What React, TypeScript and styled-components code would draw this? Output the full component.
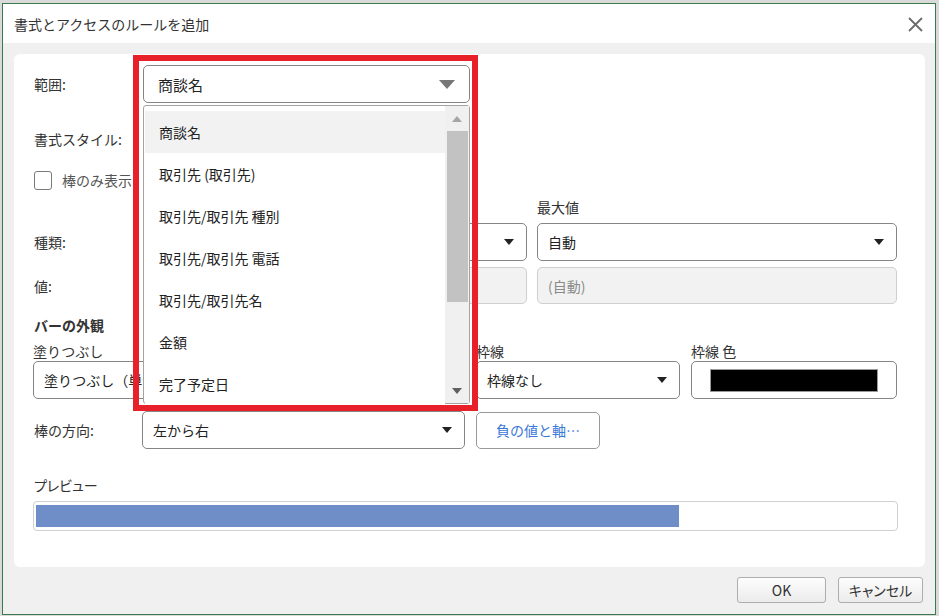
import * as React from "react";
import styled, { createGlobalStyle } from "styled-components";

const GlobalStyle = createGlobalStyle`
  html, body {
    margin: 0;
    padding: 0;
    background: #dadada;
  }
  body {
    font-family: "Noto Sans CJK JP", "Noto Sans", sans-serif;
    color: #333;
  }
`;

const Window = styled.div`
  position: relative;
  box-sizing: border-box;
  margin: 3px 0 0 2px;
  width: 934px;
  height: 612px;
  border: 1px solid #3a7a4c;
  background: #f0f0f0;
  display: flex;
  flex-direction: column;
`;

const TitleBar = styled.div`
  height: 39px;
  background: #fff;
  display: flex;
  align-items: center;
  justify-content: space-between;
  padding: 0 12px 0 11px;
  font-size: 14px;
  color: #333;
`;

const CloseButton = styled.div`
  width: 16px;
  height: 16px;
  display: flex;
  align-items: center;
  justify-content: center;
  margin-top: 1px;
`;

const Body = styled.div`
  flex: 1;
  padding: 11px 10px 0 11px;
  display: flex;
  flex-direction: column;
`;

const Card = styled.div`
  position: relative;
  background: #fff;
  border-radius: 6px;
  height: 513px;
  box-sizing: border-box;
  padding: 11px 27px 0 20px;
  font-size: 14px;
`;

const Row = styled.div<{ $top?: number }>`
  display: flex;
  align-items: center;
  margin-top: ${(p) => p.$top ?? 0}px;
`;

const Label = styled.div<{ $w?: number }>`
  width: ${(p) => p.$w ?? 109}px;
  flex-shrink: 0;
  font-size: 14px;
  color: #333;
  line-height: 20px;
`;

const Select = styled.div<{ $w?: number; $h?: number; $size?: number }>`
  box-sizing: border-box;
  width: ${(p) => (p.$w ? `${p.$w}px` : "100%")};
  height: ${(p) => p.$h ?? 38}px;
  border: 1px solid #858585;
  border-radius: 5px;
  background: #fff;
  display: flex;
  align-items: center;
  justify-content: space-between;
  padding: 0 12px 0 10px;
  font-size: ${(p) => p.$size ?? 14}px;
  color: #222;
  white-space: nowrap;
  overflow: hidden;
`;

const ReadOnlyField = styled.div`
  box-sizing: border-box;
  height: 37px;
  border: 1px solid #cfcfcf;
  border-radius: 5px;
  background: #f2f2f2;
  display: flex;
  align-items: center;
  padding: 0 10px;
  font-size: 14px;
  color: #8a8a8a;
`;

const Caret = styled.span`
  width: 0;
  height: 0;
  border-left: 5px solid transparent;
  border-right: 5px solid transparent;
  border-top: 6px solid #222;
`;

const BigCaret = styled.span`
  width: 0;
  height: 0;
  border-left: 8px solid transparent;
  border-right: 8px solid transparent;
  border-top: 9px solid #777;
  margin-right: 2px;
`;

const CheckRow = styled.div`
  display: flex;
  align-items: center;
  gap: 10px;
  margin-top: 12px;
  height: 20px;
  color: #555;
`;

const CheckBox = styled.span`
  box-sizing: border-box;
  width: 18px;
  height: 19px;
  border: 1px solid #7a7a7a;
  border-radius: 3px;
  background: #fff;
`;

const RangeGrid = styled.div`
  display: grid;
  grid-template-columns: 99px 384px 360px;
  column-gap: 10px;
  row-gap: 6px;
  margin-top: 10px;
  align-items: center;
`;

const ColumnLabel = styled.div<{ $lift?: number }>`
  font-size: 14px;
  line-height: 20px;
  margin-top: ${(p) => -(p.$lift ?? 0)}px;
  margin-bottom: ${(p) => (p.$lift ?? 0) - 3}px;
  color: #333;
`;

const SectionTitle = styled.div`
  font-weight: bold;
  font-size: 14px;
  line-height: 20px;
  margin-top: 11px;
  color: #333;
`;

const AppearanceGrid = styled.div`
  display: grid;
  grid-template-columns: 432px 204px 206px;
  column-gap: 11px;
  row-gap: 2px;
  margin-top: 7px;
  margin-left: -1px;
  margin-right: -1px;
`;

const ColorField = styled.div`
  box-sizing: border-box;
  height: 38px;
  border: 1px solid #858585;
  border-radius: 5px;
  background: #fff;
  display: flex;
  align-items: center;
  justify-content: center;
`;

const Swatch = styled.div<{ $color: string }>`
  width: 168px;
  height: 23px;
  background: ${(p) => p.$color};
  border: 1px solid #9a9a9a;
  box-sizing: border-box;
`;

const LinkButton = styled.div`
  box-sizing: border-box;
  width: 124px;
  height: 37px;
  border: 1px solid #999;
  border-radius: 5px;
  background: #fff;
  display: flex;
  align-items: center;
  justify-content: center;
  color: #3b78d8;
  font-size: 14px;
  margin-left: 11px;
`;

const PreviewLabel = styled.div`
  font-size: 14px;
  line-height: 20px;
  margin-top: 26px;
  color: #333;
  font-feature-settings: "palt";
`;

const PreviewBox = styled.div`
  box-sizing: border-box;
  height: 30px;
  margin: 6px 0 0 -1px;
  border: 1px solid #d0d0d0;
  border-radius: 4px;
  padding: 3px 2px;
`;

const PreviewBar = styled.div`
  height: 22px;
  background: #6f8ec8;
`;

const Footer = styled.div`
  display: flex;
  justify-content: flex-end;
  gap: 12px;
  padding: 10px 2px 0 0;
`;

const DialogButton = styled.div<{ $w: number }>`
  box-sizing: border-box;
  width: ${(p) => p.$w}px;
  height: 26px;
  border: 1px solid #adadad;
  border-radius: 3px;
  background: linear-gradient(#fdfdfd, #ebebeb);
  display: flex;
  align-items: center;
  justify-content: center;
  font-size: 14px;
  color: #333;
  font-feature-settings: "palt";
`;

/* overlays: the open dropdown and the red callout frame */
const DropList = styled.div`
  position: absolute;
  left: 129px;
  top: 51px;
  width: 327px;
  height: 299px;
  box-sizing: border-box;
  border: 1px solid #a3a3a3;
  border-radius: 3px;
  background: #fff;
  display: flex;
  padding: 5px 0 0 1px;
  z-index: 2;
`;

const Items = styled.div`
  flex: 1;
  display: flex;
  flex-direction: column;
`;

const Item = styled.div<{ $active?: boolean }>`
  height: 42px;
  flex-shrink: 0;
  display: flex;
  align-items: center;
  padding-left: 14px;
  font-size: 14px;
  color: #222;
  background: ${(p) => (p.$active ? "#f2f2f2" : "#fff")};
`;

const ScrollTrack = styled.div`
  width: 24px;
  margin-top: -5px;
  background: #f0f0f0;
  display: flex;
  flex-direction: column;
  align-items: center;
`;

const ScrollArrow = styled.div<{ $down?: boolean; $color: string }>`
  height: 25px;
  display: flex;
  align-items: center;
  justify-content: center;
  &::after {
    content: "";
    border-left: 5px solid transparent;
    border-right: 5px solid transparent;
    ${(p) =>
      p.$down
        ? `border-top: 6px solid ${p.$color};`
        : `border-bottom: 6px solid ${p.$color};`}
  }
`;

const ScrollThumb = styled.div`
  width: 21px;
  height: 171px;
  background: #c2c2c2;
`;

const Callout = styled.div`
  position: absolute;
  left: 119px;
  top: 1px;
  width: 345px;
  height: 356px;
  box-sizing: border-box;
  border: 6px solid #e8202a;
  z-index: 3;
  pointer-events: none;
`;

const fields = [
  "商談名",
  "取引先 (取引先)",
  "取引先/取引先 種別",
  "取引先/取引先 電話",
  "取引先/取引先名",
  "金額",
  "完了予定日",
];

export default function App() {
  return (
    <>
      <GlobalStyle />
      <Window>
        <TitleBar>
          <span>書式とアクセスのルールを追加</span>
          <CloseButton>
            <svg width="15" height="15" viewBox="0 0 15 15">
              <path d="M1 1L14 14M14 1L1 14" stroke="#6b6b6b" strokeWidth="1.8" />
            </svg>
          </CloseButton>
        </TitleBar>
        <Body>
          <Card>
            <Row>
              <Label>範囲:</Label>
              <Select $w={327} $size={15}>
                <span style={{ marginLeft: 4 }}>商談名</span>
                <BigCaret />
              </Select>
            </Row>
            <Row $top={17}>
              <Label>書式スタイル:</Label>
              <Select $w={327}>
                <span />
                <Caret />
              </Select>
            </Row>
            <CheckRow>
              <CheckBox />
              <span>棒のみ表示</span>
            </CheckRow>
            <RangeGrid>
              <div />
              <div />
              <ColumnLabel $lift={3}>最大値</ColumnLabel>
              <Label>種類:</Label>
              <Select>
                <span />
                <Caret />
              </Select>
              <Select>
                <span>自動</span>
                <Caret />
              </Select>
              <Label>値:</Label>
              <ReadOnlyField />
              <ReadOnlyField>(自動)</ReadOnlyField>
            </RangeGrid>
            <SectionTitle>バーの外観</SectionTitle>
            <AppearanceGrid>
              <ColumnLabel $lift={1}>塗りつぶし</ColumnLabel>
              <ColumnLabel $lift={1}>枠線</ColumnLabel>
              <ColumnLabel $lift={1}>枠線 色</ColumnLabel>
              <Select>
                <span>塗りつぶし（単色）</span>
                <Caret />
              </Select>
              <Select>
                <span>枠線なし</span>
                <Caret />
              </Select>
              <ColorField>
                <Swatch $color="#000" />
              </ColorField>
            </AppearanceGrid>
            <Row $top={12}>
              <Label $w={108}>棒の方向:</Label>
              <Select $w={323}>
                <span>左から右</span>
                <Caret />
              </Select>
              <LinkButton>負の値と軸…</LinkButton>
            </Row>
            <PreviewLabel>プレビュー</PreviewLabel>
            <PreviewBox>
              <PreviewBar style={{ width: 643 }} />
            </PreviewBox>

            <DropList>
              <Items>
                {fields.map((f, i) => (
                  <Item key={f} $active={i === 0}>
                    {f}
                  </Item>
                ))}
              </Items>
              <ScrollTrack>
                <ScrollArrow $color="#a6a6a6" />
                <ScrollThumb />
                <div style={{ flex: 1 }} />
                <ScrollArrow $down $color="#606060" />
              </ScrollTrack>
            </DropList>
            <Callout />
          </Card>
          <Footer>
            <DialogButton $w={89}>OK</DialogButton>
            <DialogButton $w={85}>キャンセル</DialogButton>
          </Footer>
        </Body>
      </Window>
    </>
  );
}
